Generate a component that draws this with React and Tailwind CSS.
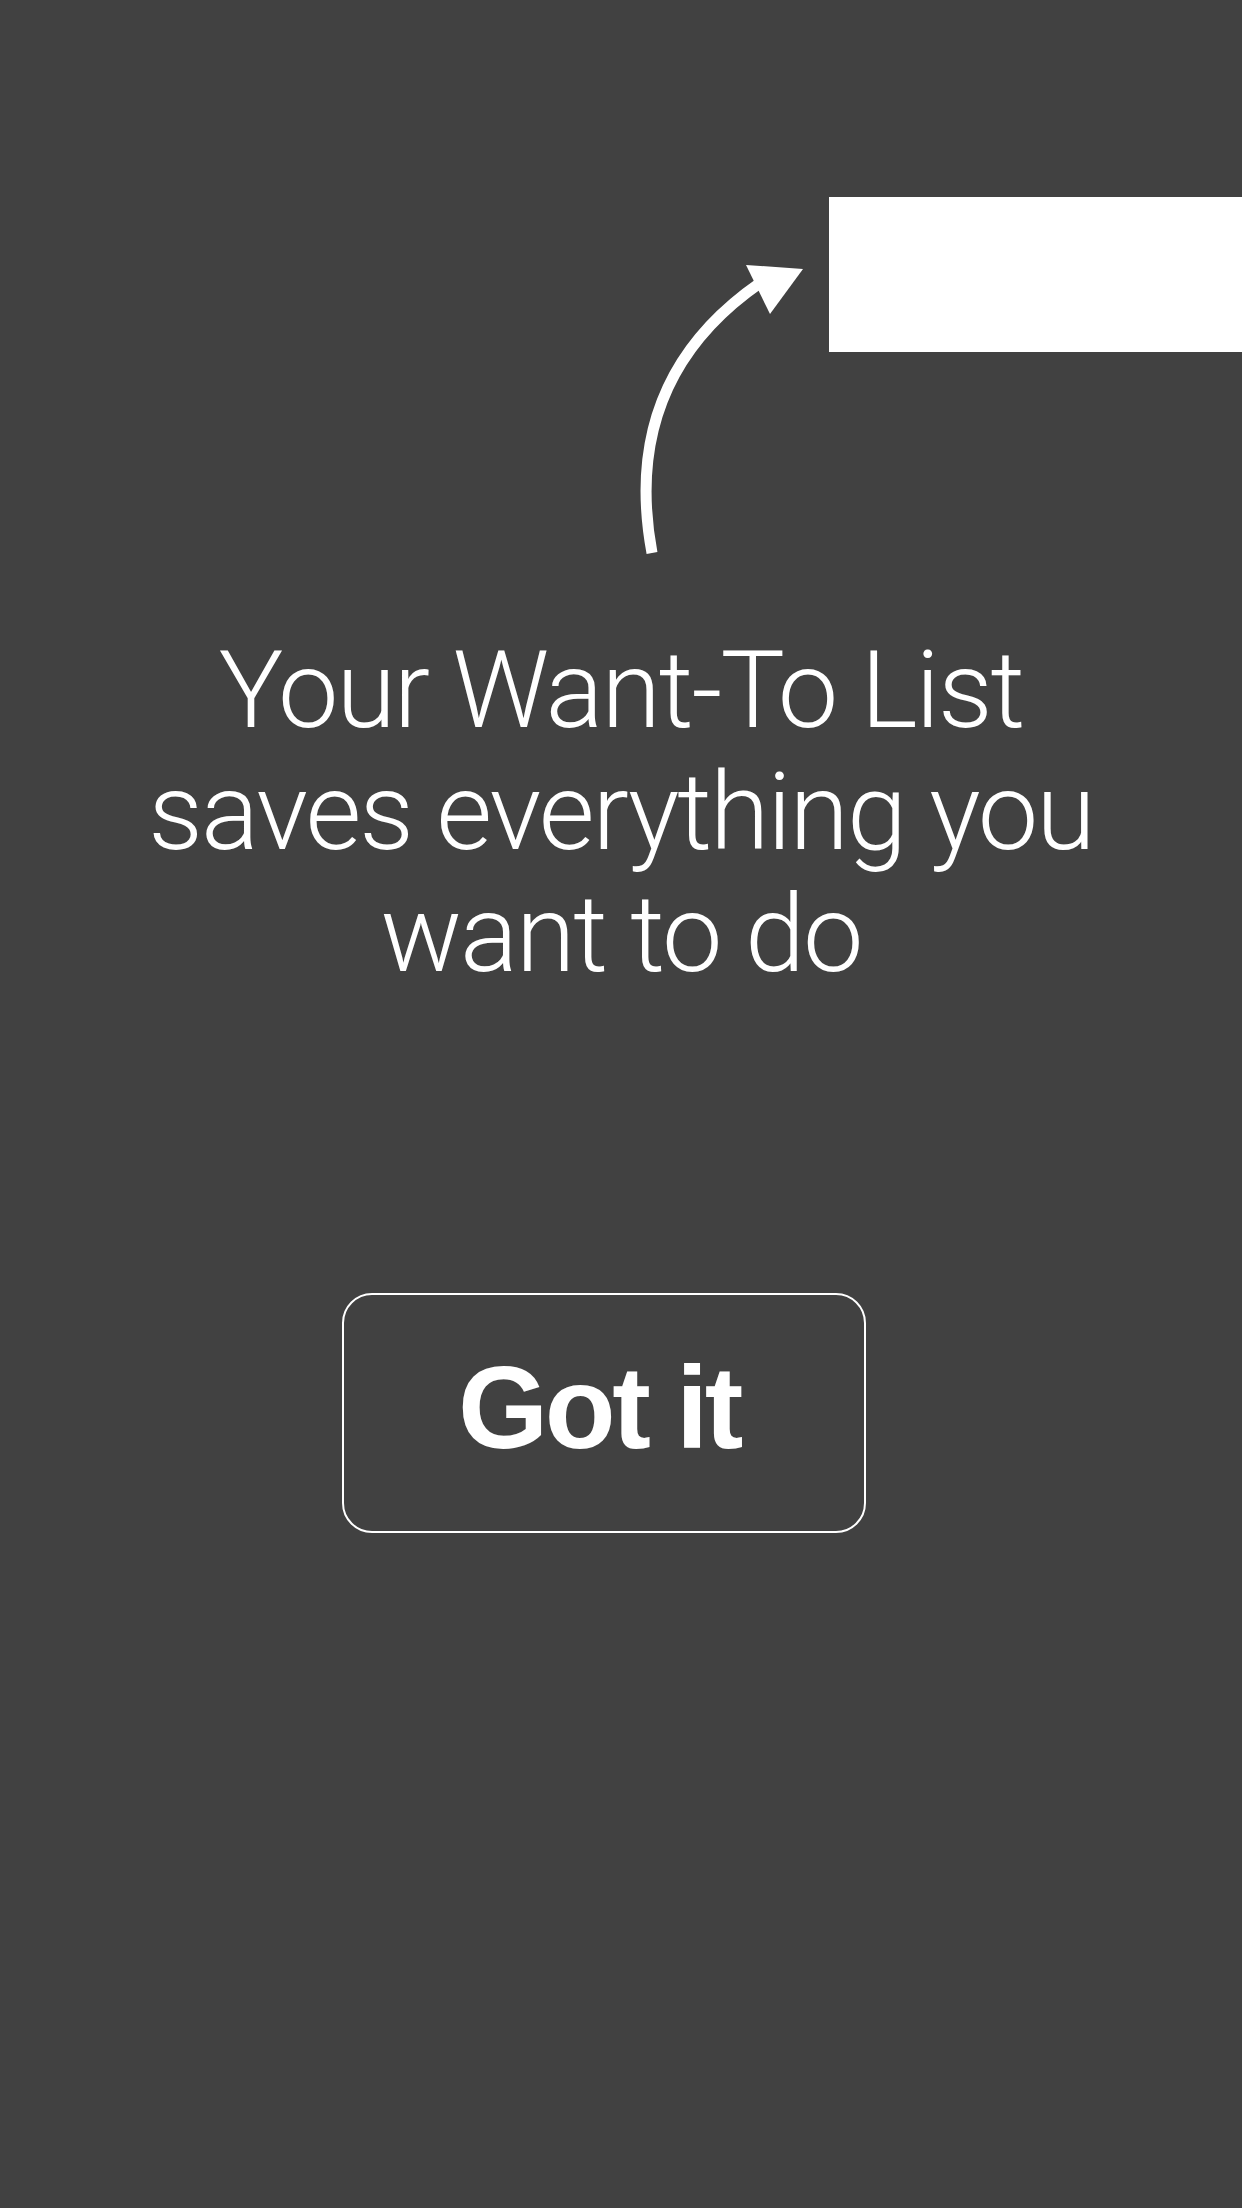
export default function App() {
  return (
    <div className="min-h-[2208px] w-full bg-[#414141] flex flex-col text-white">
      {/* Top: highlighted target + pointer arrow */}
      <div className="relative h-[560px] pt-[197px]">
        <div className="ml-auto w-[413px] h-[155px] bg-white" />
        <svg className="absolute inset-0 w-full h-full" viewBox="0 0 1242 560" fill="none">
          <path d="M652 553 Q620 380 760 283" stroke="#ffffff" strokeWidth="11" />
          <polygon points="746,265 803,269 770,314" fill="#ffffff" />
        </svg>
      </div>

      {/* Message */}
      <p
        className="mt-[69px] text-center text-[108px] leading-[122px] font-light tracking-[-2px] whitespace-nowrap"
        style={{ fontFamily: 'Roboto, "Liberation Sans", sans-serif' }}
      >
        <span className="block">Your Want-To List</span>
        <span className="block">saves everything you</span>
        <span className="block">want to do</span>
      </p>

      {/* Dismiss */}
      <button className="mt-[298px] ml-[342px] w-[524px] h-[240px] border-2 border-white rounded-[30px] flex items-center justify-center pb-[10px] pr-[10px]">
        <span
          className="text-[116px] leading-none font-bold tracking-[-0.03em]"
          style={{ fontFamily: '"Liberation Sans", Arial, sans-serif' }}
        >
          Got it
        </span>
      </button>
    </div>
  )
}
